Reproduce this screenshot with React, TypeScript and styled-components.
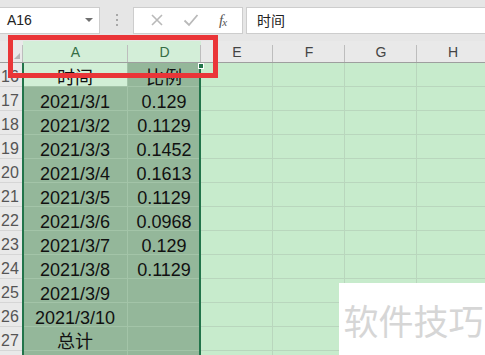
import React from 'react';
import styled, { createGlobalStyle } from 'styled-components';

const GlobalStyle = createGlobalStyle`
  html, body {
    margin: 0;
    padding: 0;
    background: #e6e6e6;
    overflow: hidden;
  }
  body {
    font-family: 'Liberation Sans', 'Noto Sans CJK SC', sans-serif;
  }
`;

const COLS = '23px 105px 73px 72px 72px 72px 72px';

const Screen = styled.div`
  position: relative;
  width: 485px;
  height: 355px;
  overflow: hidden;
  background: #e6e6e6;
`;

const Toolbar = styled.div`
  display: flex;
  align-items: center;
  height: 41px;
  padding-bottom: 1px;
  box-sizing: border-box;
`;

const Box = styled.div<{ $w?: number; $grow?: boolean }>`
  display: flex;
  align-items: center;
  height: 27px;
  box-sizing: border-box;
  background: #fff;
  border: 1px solid #cdcdcd;
  width: ${(p) => (p.$w ? `${p.$w}px` : 'auto')};
  flex: ${(p) => (p.$grow ? '1' : 'none')};
`;

const NameBox = styled(Box)`
  border-left: none;
  padding: 0 6px 0 7px;
  justify-content: space-between;
  font-size: 14px;
  color: #222;
`;

const Caret = styled.span`
  width: 0;
  height: 0;
  border-left: 4px solid transparent;
  border-right: 4px solid transparent;
  border-top: 4px solid #707070;
`;

const Dots = styled.div`
  width: 33px;
  display: flex;
  flex-direction: column;
  align-items: center;
  gap: 3px;
  span {
    width: 2px;
    height: 2px;
    background: #a8a8a8;
  }
`;

const IconBox = styled(Box)`
  justify-content: space-around;
  padding: 0 6px;
  margin-right: 3px;
`;

const Fx = styled.span`
  font-family: 'Liberation Serif', serif;
  font-style: italic;
  font-size: 15px;
  color: #555;
  letter-spacing: -1px;
  sub {
    font-size: 11px;
    vertical-align: -1px;
  }
`;

const Formula = styled(Box)`
  border-right: none;
  padding-left: 10px;
  font-size: 14px;
  color: #222;
  font-family: 'Noto Sans CJK SC', sans-serif;
`;

const Grid = styled.div`
  display: grid;
  grid-template-columns: ${COLS};
`;

const HeadCell = styled.div<{ $sel?: boolean }>`
  height: 22px;
  box-sizing: border-box;
  display: flex;
  align-items: center;
  justify-content: center;
  font-size: 14px;
  color: ${(p) => (p.$sel ? '#356d45' : '#444')};
  background: ${(p) => (p.$sel ? '#d3eed8' : '#e9e9e9')};
  border-bottom: 1px solid #9e9e9e;
  position: relative;
  &::after {
    content: '';
    position: absolute;
    right: 0;
    top: 4px;
    bottom: 0;
    width: 1px;
    background: #bdbdbd;
  }
`;

const Corner = styled(HeadCell)`
  &::before {
    content: '';
    position: absolute;
    right: 3px;
    bottom: 3px;
    width: 0;
    height: 0;
    border-left: 6px solid transparent;
    border-bottom: 6px solid #b5b5b5;
  }
`;

const RowNum = styled.div`
  height: 24px;
  box-sizing: border-box;
  background: #e9e9e9;
  border-right: 1px solid #bdbdbd;
  border-bottom: 1px solid #d6d6d6;
  color: #555;
  font-size: 16px;
  line-height: 16px;
  padding: 6px 0 0 1px;
`;

type Tone = 'plain' | 'sel' | 'active';

const Cell = styled.div<{ $tone: Tone }>`
  height: 24px;
  box-sizing: border-box;
  text-align: center;
  padding-top: 6px;
  line-height: 18px;
  font-size: 18px;
  color: #111;
  white-space: nowrap;
  background: ${(p) =>
    p.$tone === 'sel' ? '#94b79a' : p.$tone === 'active' ? '#d1efd6' : '#c7ebcc'};
  border-right: 1px solid
    ${(p) => (p.$tone === 'plain' ? '#b9d6bd' : '#a3c4a8')};
  border-bottom: 1px solid
    ${(p) => (p.$tone === 'plain' ? '#b9d6bd' : '#a3c4a8')};
`;

const SelLine = styled.div<{ $left: number }>`
  position: absolute;
  top: 63px;
  bottom: 0;
  left: ${(p) => p.$left}px;
  width: 2px;
  background: #22744a;
`;

const Handle = styled.div`
  position: absolute;
  left: 198px;
  top: 63px;
  width: 6px;
  height: 6px;
  background: #22744a;
  border: 1px solid #fff;
  box-sizing: border-box;
`;

const Annotation = styled.div`
  position: absolute;
  left: 8px;
  top: 35px;
  width: 210px;
  height: 43px;
  box-sizing: border-box;
  border: 5px solid #ea3538;
`;

const Watermark = styled.div`
  position: absolute;
  left: 339px;
  top: 283px;
  right: 0;
  bottom: 0;
  background: #fff;
  display: flex;
  align-items: center;
  justify-content: center;
  padding-left: 3px;
  font-family: 'Noto Sans CJK SC', sans-serif;
  font-size: 35px;
  color: #d6d6d6;
`;

const rows: [string, string, string][] = [
  ['16', '时间', '比例'],
  ['17', '2021/3/1', '0.129'],
  ['18', '2021/3/2', '0.1129'],
  ['19', '2021/3/3', '0.1452'],
  ['20', '2021/3/4', '0.1613'],
  ['21', '2021/3/5', '0.1129'],
  ['22', '2021/3/6', '0.0968'],
  ['23', '2021/3/7', '0.129'],
  ['24', '2021/3/8', '0.1129'],
  ['25', '2021/3/9', ''],
  ['26', '2021/3/10', ''],
  ['27', '总计', ''],
  ['', '', ''],
];

const X = () => (
  <svg width="14" height="14" viewBox="0 0 14 14">
    <path d="M2 2 L12 12 M12 2 L2 12" stroke="#b9b9b9" strokeWidth="1.6" />
  </svg>
);

const Check = () => (
  <svg width="16" height="14" viewBox="0 0 16 14">
    <path d="M1.5 7.5 L6 12 L14.5 2" stroke="#b9b9b9" strokeWidth="1.8" fill="none" />
  </svg>
);

export default function App(): JSX.Element {
  return (
    <Screen>
      <GlobalStyle />
      <Toolbar>
        <NameBox $w={100}>
          A16
          <Caret />
        </NameBox>
        <Dots>
          <span />
          <span />
          <span />
        </Dots>
        <IconBox $w={110}>
          <X />
          <Check />
          <Fx>
            f<sub>x</sub>
          </Fx>
        </IconBox>
        <Formula $grow>时间</Formula>
      </Toolbar>
      <Grid>
        <Corner />
        {['A', 'D', 'E', 'F', 'G', 'H'].map((c, i) => (
          <HeadCell key={c} $sel={i < 2}>
            {c}
          </HeadCell>
        ))}
        {rows.map(([n, a, d], i) => (
          <React.Fragment key={i}>
            <RowNum>{n}</RowNum>
            <Cell $tone={i === 0 ? 'active' : 'sel'}>{a}</Cell>
            <Cell $tone="sel">{d}</Cell>
            <Cell $tone="plain" />
            <Cell $tone="plain" />
            <Cell $tone="plain" />
            <Cell $tone="plain" />
          </React.Fragment>
        ))}
      </Grid>
      <SelLine $left={22} />
      <SelLine $left={199} />
      <Handle />
      <Annotation />
      <Watermark>软件技巧</Watermark>
    </Screen>
  );
}
